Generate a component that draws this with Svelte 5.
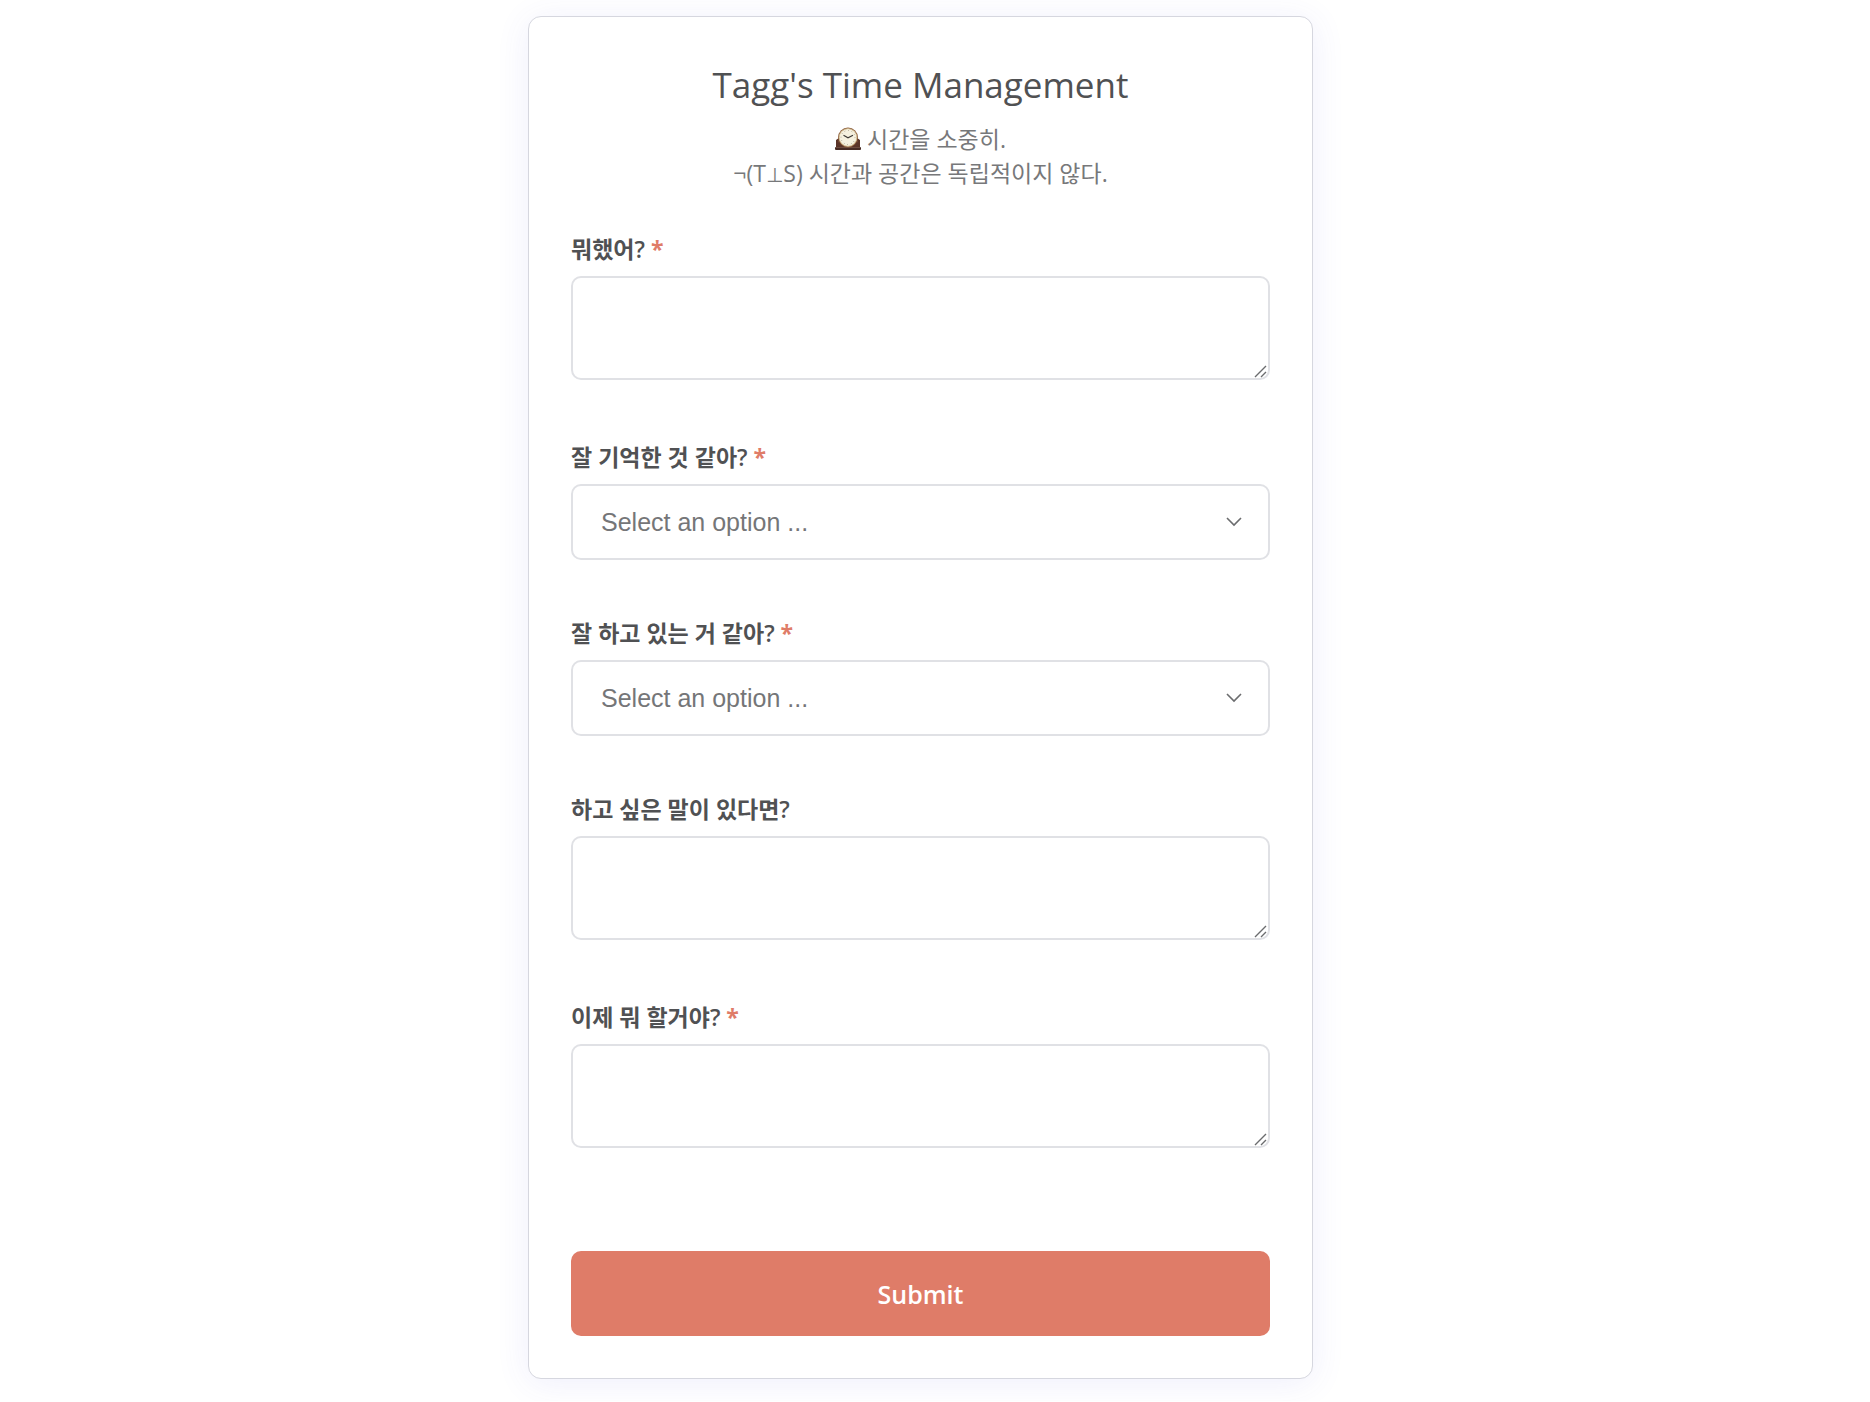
<script>
  const fields = [
    { id: 'did', label: '뭐했어?', required: true, type: 'text' },
    { id: 'memory', label: '잘 기억한 것 같아?', required: true, type: 'select' },
    { id: 'doing', label: '잘 하고 있는 거 같아?', required: true, type: 'select' },
    { id: 'note', label: '하고 싶은 말이 있다면?', required: false, type: 'text' },
    { id: 'next', label: '이제 뭐 할거야?', required: true, type: 'text' }
  ];
</script>

<main>
  <form class="card" onsubmit={(e) => e.preventDefault()}>
    <header>
      <h1>Tagg's Time Management</h1>
      <p>
        <svg class="clock" viewBox="0 0 26 24" role="img" aria-label="Mantel clock">
          <path d="M1 22V13q3-1 5-5l3-5q4-4 8 0l3 5q2 4 5 5v9z" fill="#5b3529" />
          <path d="M3 15q3-1 4-3M23 15q-3-1-4-3" fill="none" stroke="#7c4a38" />
          <rect x="0" y="20" width="26" height="3" rx="1" fill="#472b24" />
          <path d="M1 20.5h24" stroke="#80594b" stroke-width="0.7" />
          <circle cx="13" cy="10.5" r="10" fill="#8a5c3a" />
          <circle cx="13" cy="10.5" r="8.8" fill="#f6f1df" stroke="#d9c79a" stroke-width="0.8" />
          <circle cx="13" cy="10.5" r="7" fill="none" stroke="#8d8671" stroke-width="1" stroke-dasharray="0.6 3.06" />
          <path d="M8.5 8.3L13 10.8l5-2.6" fill="none" stroke="#3d3935" stroke-width="1.1" />
        </svg>
        시간을 소중히.<br />¬(T<span class="perp">⊥</span>S) 시간과 공간은 독립적이지 않다.
      </p>
    </header>

    {#each fields as field (field.id)}
      <div class="field" class:long={field.type === 'text'}>
        <label for={field.id}>
          {field.label}
          {#if field.required}<span class="star">*</span>{/if}
        </label>
        <div class="control">
          {#if field.type === 'text'}
            <textarea id={field.id} required={field.required}></textarea>
            <svg class="grip" viewBox="0 0 14 14" aria-hidden="true">
              <path d="M1 13L12 2M7 13l5-5" />
            </svg>
          {:else}
            <select id={field.id} required={field.required}>
              <option value="">Select an option ...</option>
            </select>
            <svg class="chevron" viewBox="0 0 16 10" aria-hidden="true">
              <path d="M1 1l7 7 7-7" />
            </svg>
          {/if}
        </div>
      </div>
    {/each}

    <button type="submit">Submit</button>
  </form>
</main>

<style>
  :global(body) {
    margin: 0;
    background: #fff;
  }

  main {
    padding: 16px 29px 22px 0;
    font-family: 'Open Sans', 'Noto Sans CJK KR', sans-serif;
    color: #505153;
  }

  .card {
    box-sizing: border-box;
    max-width: 785px;
    margin: 0 auto;
    padding: 42px;
    border: 1px solid #d6d7df;
    border-radius: 13px;
    background: #fff;
    box-shadow: 0 4px 34px rgba(80, 80, 220, 0.09);
  }

  header {
    margin-bottom: 43px;
    text-align: center;
  }

  h1 {
    margin: 0;
    font-size: 35px;
    font-weight: 400;
    line-height: 52px;
  }

  p {
    margin: 11px 0 0;
    font-size: 23px;
    line-height: 34px;
    color: #77787a;
  }

  .clock {
    width: 26px;
    height: 24px;
    vertical-align: -3px;
  }

  .perp {
    font-family: 'DejaVu Sans', sans-serif;
    font-size: 20px;
    line-height: 1;
  }

  .field {
    margin-bottom: 57px;
  }

  .field.long {
    margin-bottom: 61px;
  }

  label {
    display: block;
    margin-bottom: 11px;
    font-size: 23px;
    font-weight: 600;
    line-height: 32px;
  }

  .star {
    color: #df7c68;
    font-weight: 700;
  }

  .control {
    position: relative;
    display: grid;
  }

  textarea,
  select {
    box-sizing: border-box;
    width: 100%;
    margin: 0;
    border: 2px solid #e0e1e5;
    border-radius: 10px;
    background: #fff;
    color: #757678;
    font-family: 'Liberation Sans', Arial, sans-serif;
    font-size: 25px;
  }

  textarea {
    height: 104px;
    padding: 16px 28px;
    resize: vertical;
  }

  textarea::-webkit-resizer {
    display: none;
  }

  select {
    height: 76px;
    padding: 0 60px 0 28px;
    appearance: none;
  }

  .grip,
  .chevron {
    position: absolute;
    fill: none;
    stroke: #6b6c6e;
    pointer-events: none;
  }

  .grip {
    right: 2px;
    bottom: 2px;
    width: 14px;
    height: 14px;
    stroke-width: 1.4;
  }

  .chevron {
    right: 28px;
    top: 33px;
    width: 16px;
    height: 10px;
    stroke-width: 1.6;
  }

  button {
    display: block;
    width: 100%;
    height: 85px;
    margin-top: 103px;
    border: 0;
    border-radius: 10px;
    background: #df7c68;
    color: #fff;
    font-family: inherit;
    font-size: 25px;
    font-weight: 600;
  }
</style>
